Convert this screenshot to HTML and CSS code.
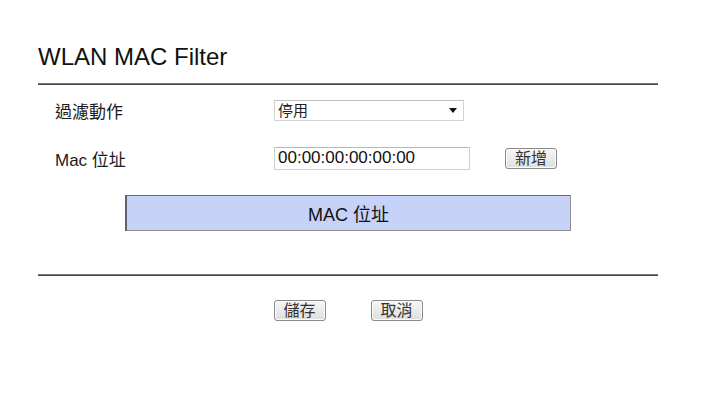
FILE: index.html
```html
<!DOCTYPE html>
<html lang="zh-Hant">
<head>
    <meta charset="UTF-8">
    <title>WLAN MAC Filter</title>
    <link rel="stylesheet" href="styles.css">
</head>
<body>
    <div class="page">
        <h1>WLAN MAC Filter</h1>
        <hr class="rule">

        <div class="form-row">
            <label class="form-label" for="action">過濾動作</label>
            <div class="select-wrap">
                <select id="action">
                    <option>停用</option>
                    <option>允許</option>
                    <option>拒絕</option>
                </select>
            </div>
        </div>

        <div class="form-row">
            <label class="form-label" for="mac">Mac 位址</label>
            <input type="text" id="mac" class="mac-input" value="00:00:00:00:00:00">
            <button class="btn btn-add">新增</button>
        </div>

        <table class="mac-table">
            <tr><th>MAC 位址</th></tr>
        </table>

        <hr class="rule rule-bottom">

        <div class="actions">
            <button class="btn">儲存</button>
            <button class="btn">取消</button>
        </div>
    </div>
</body>
</html>
```

FILE: styles.css
```css
body {
    margin: 0;
    background-color: #ffffff;
    color: #1a1a1a;
    font-family: "Liberation Sans", "Noto Sans CJK TC", sans-serif;
}

.page {
    width: 620px;
    margin-left: 38px;
    padding-top: 42px;
}

h1 {
    margin: 0;
    font-size: 24px;
    font-weight: normal;
    line-height: 30px;
    color: #111111;
}

.rule {
    margin: 11px 0 0 0;
    height: 0;
    border: none;
    border-top: 1px solid #777777;
    border-bottom: 1px solid #444444;
}

.rule-bottom {
    margin-top: 43px;
}

.form-row {
    display: flex;
    align-items: center;
    height: 48px;
    padding-left: 17px;
}

.form-row:first-of-type {
    margin-top: 1px;
}

.form-label {
    width: 219px;
    font-size: 17px;
    color: #1a1a1a;
}

.select-wrap {
    position: relative;
    width: 190px;
    height: 21px;
}

.select-wrap select {
    appearance: none;
    width: 100%;
    height: 100%;
    margin: 0;
    padding: 0 0 0 3px;
    border: 1px solid #d4d4d4;
    border-top-color: #c0c0c0;
    background-color: #ffffff;
    font-family: inherit;
    font-size: 15px;
    color: #222222;
    box-sizing: border-box;
}

.select-wrap::after {
    content: "";
    position: absolute;
    right: 7px;
    top: 8px;
    border-left: 4px solid transparent;
    border-right: 4px solid transparent;
    border-top: 5px solid #111111;
    pointer-events: none;
}

.mac-input {
    width: 196px;
    height: 23px;
    margin: 0;
    padding: 0 3px;
    border: 1px solid #d0d0d0;
    border-top-color: #b8b8b8;
    font-family: inherit;
    font-size: 17px;
    color: #111111;
    box-sizing: border-box;
}

.btn {
    width: 52px;
    height: 21px;
    padding: 0;
    border: 1px solid #8a8a8a;
    border-radius: 3px;
    background: linear-gradient(#f6f6f6, #dedede);
    font-family: inherit;
    font-size: 16px;
    line-height: 19px;
    color: #333333;
    box-shadow: inset 0 0 0 1px #fbfbfb;
}

.btn-add {
    margin-left: 35px;
}

.mac-table {
    width: 446px;
    margin: 13px 0 0 87px;
    border-collapse: collapse;
}

.mac-table th {
    height: 34px;
    padding: 0;
    background-color: #c6d2f8;
    border: 1px solid #8e8e8e;
    border-left: 2px solid #5c6270;
    border-top-color: #6b6b6b;
    font-size: 18px;
    font-weight: normal;
    color: #111111;
}

.actions {
    display: flex;
    justify-content: center;
    gap: 45px;
    margin-top: 24px;
}
```
